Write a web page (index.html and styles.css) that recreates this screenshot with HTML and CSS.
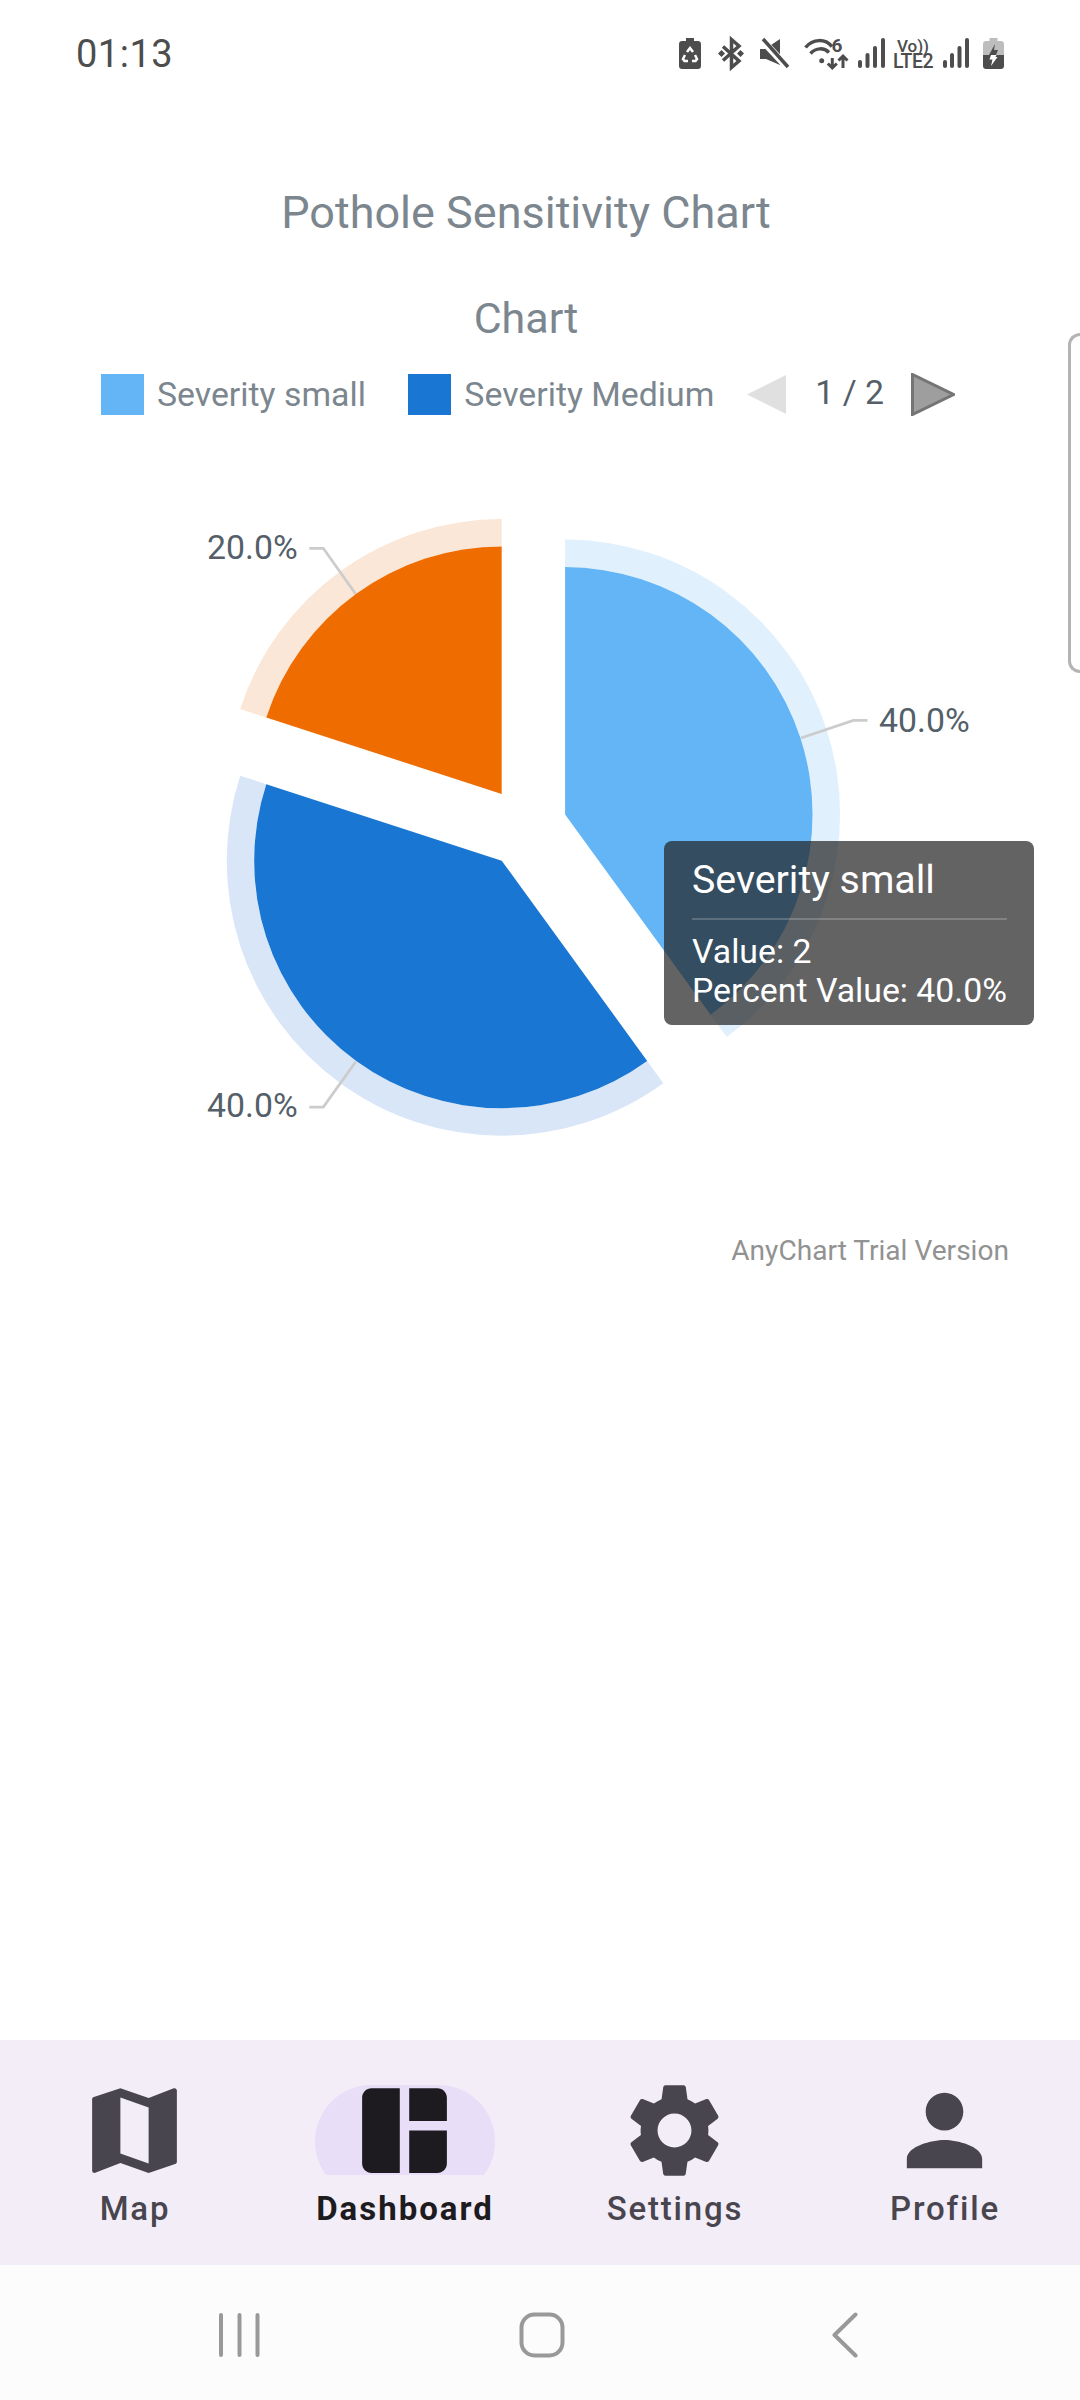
FILE: index.html
```html
<!DOCTYPE html>
<html lang="en">
<head>
    <meta charset="UTF-8">
    <meta name="viewport" content="width=device-width, initial-scale=1.0">
    <title>Pothole Sensitivity Chart</title>
    <link rel="stylesheet" href="styles.css">
</head>
<body>
    <div class="status-bar">
        <span class="clock">01:13</span>
        <div class="status-icons">
            <svg class="status-icon" width="22" height="31" viewBox="0 0 22 31">
                <path d="M7 0h8v3h4c1.700 0 3 1.300 3 3v22c0 1.700-1.300 3-3 3H3c-1.700 0-3-1.300-3-3V6c0-1.700 1.300-3 3-3h4z"/>
                <path class="cut" d="M8 14l3-4 3 4M16 17l2 4-1.500 2H13M9 23H5.500L4 21l2-4"/>
            </svg>
            <svg class="status-icon icon-bt" width="26" height="31" viewBox="0 0 26 31">
                <path class="line" d="M5 8.500l16 14.500-7.500 6.500V1.500L21 8 5 22.500"/>
                <path d="M0 15.500l3.500-3.500 3.500 3.500-3.500 3.500zM19 15.500l3.500-3.500 3.500 3.500-3.500 3.500z"/>
            </svg>
            <svg class="status-icon" width="29" height="31" viewBox="0 0 29 31">
                <path d="M0 11h5L20 1v26L6 21H0z"/>
                <path class="gap" d="M1 1l27 29"/>
                <path class="line" d="M3 1l25 28"/>
            </svg>
            <svg class="status-icon" width="43" height="31" viewBox="0 0 43 31">
                <path class="line" d="M.5 9.500C8 .5 20 .5 27 8.500M5.500 15.500C11 9.500 19 9.500 24 14.500"/>
                <circle cx="16.700" cy="22.700" r="2.500"/>
                <text class="status-six" x="26.500" y="14">6</text>
                <path class="line-thin" d="M27.300 20v10M22.800 25.500l4.500 4.500 4.500-4.500M38 30V18M33.500 22.500L38 18l4.500 4.500"/>
            </svg>
            <svg class="status-icon icon-tight" width="27" height="31" viewBox="0 0 27 31">
                <rect x="0" y="22" width="4" height="8" rx="2"/>
                <rect x="7.500" y="15" width="4" height="15" rx="2"/>
                <rect x="15" y="8" width="4" height="22" rx="2"/>
                <rect x="23" y="0" width="4" height="30" rx="2"/>
            </svg>
            <div class="volte">
                <span class="volte-top">Vo))</span>
                <span class="volte-bottom">LTE2</span>
            </div>
            <svg class="status-icon icon-tight" width="26" height="31" viewBox="0 0 26 31">
                <rect x="0" y="22" width="4" height="8" rx="2"/>
                <rect x="7" y="15" width="4" height="15" rx="2"/>
                <rect x="14.500" y="8" width="4" height="22" rx="2"/>
                <rect x="22" y="0" width="4" height="30" rx="2"/>
            </svg>
            <svg class="status-icon icon-battery" width="21" height="31" viewBox="0 0 21 31">
                <path class="battery-empty" d="M6.500 0h8v3h3.500c1.700 0 3 1.300 3 3v11H0V6c0-1.700 1.300-3 3-3h3.500z"/>
                <path d="M0 17h21v11c0 1.700-1.300 3-3 3H3c-1.700 0-3-1.300-3-3z"/>
                <path d="M12 6l-6 11h7l2-5h-4z"/>
                <path class="cut-fill" d="M8 17h5.500l-1 2h2L8 28l1.500-6.500H6.500z"/>
            </svg>
        </div>
    </div>

    <div class="edge-handle"></div>

    <main class="content">
        <h1 class="page-title">Pothole Sensitivity Chart</h1>
        <h2 class="chart-title">Chart</h2>

        <div class="legend">
            <div class="legend-item">
                <span class="swatch swatch-small"></span>
                <span>Severity small</span>
            </div>
            <div class="legend-item">
                <span class="swatch swatch-medium"></span>
                <span>Severity Medium</span>
            </div>
            <div class="pager">
                <svg width="39" height="39" viewBox="0 0 39 39"><path class="arrow-off" d="M39 0v39L0 19.500z"/></svg>
                <span class="pager-text">1 / 2</span>
                <svg width="44" height="43" viewBox="0 0 44 43"><path class="arrow-on" d="M1.500 1.500v40l41-20z"/></svg>
            </div>
        </div>

        <div class="chart-canvas">
            <svg class="pie" width="1052" height="730" viewBox="0 500 1052 730">
                <!-- hover rings -->
                <path class="ring-orange" d="M240.200 709A275 275 0 0 1 501.700 519V546.500A247.500 247.500 0 0 0 266.300 717.500Z"/>
                <path class="ring-dark" d="M663.300 1083.200A275 275 0 0 1 240.200 775.700L266.300 784.200A247.500 247.500 0 0 0 647.200 1060.900Z"/>
                <path class="ring-light" d="M565.100 539.600A275 275 0 0 1 726.700 1037.100L710.600 1014.800A247.500 247.500 0 0 0 565.100 567.100Z"/>

                <!-- leader lines -->
                <path class="leader" d="M309.300 548.300H323.300L355.700 594"/>
                <path class="leader" d="M309.300 1107H323.300L355.700 1061.700"/>
                <path class="leader" d="M801 738L853.400 720.400H867.500"/>

                <!-- slices -->
                <path class="slice-orange" d="M501.700 794L266.300 717.500A247.500 247.500 0 0 1 501.700 546.500Z"/>
                <path class="slice-dark" d="M501.700 860.700L647.200 1060.900A247.500 247.500 0 0 1 266.300 784.200Z"/>
                <path class="slice-light" d="M565.100 814.600V567.100A247.500 247.500 0 0 1 710.600 1014.800Z"/>

                <text class="slice-label" x="207" y="559">20.0%</text>
                <text class="slice-label" x="207" y="1117">40.0%</text>
                <text class="slice-label" x="879" y="732">40.0%</text>
            </svg>

            <div class="tooltip">
                <div class="tooltip-title">Severity small</div>
                <div class="tooltip-line"></div>
                <div class="tooltip-row">Value: 2</div>
                <div class="tooltip-row">Percent Value: 40.0%</div>
            </div>
        </div>

        <div class="watermark">AnyChart Trial Version</div>
    </main>

    <nav class="bottom-nav">
        <div class="nav-item">
            <div class="nav-icon">
                <svg width="113" height="113" viewBox="0 0 24 24">
                    <path fill-rule="evenodd" d="M20.500 3l-.16.03L15 5.100 9 3 3.360 4.900c-.21.07-.36.25-.36.48V20.500c0 .28.22.5.5.5l.16-.03L9 18.900l6 2.100 5.640-1.900c.21-.07.36-.25.36-.48V3.500c0-.28-.22-.5-.5-.5zM15 19l-6-2.110V5l6 2.110V19z"/>
                </svg>
            </div>
            <span class="nav-label">Map</span>
        </div>
        <div class="nav-item active">
            <div class="nav-icon">
                <span class="nav-pill"></span>
                <svg width="113" height="113" viewBox="0 0 24 24">
                    <path d="M11 21H5c-1.100 0-2-.9-2-2V5c0-1.100.9-2 2-2h6v18zm2 0h6c1.100 0 2-.9 2-2v-7h-8v9zm8-11V5c0-1.100-.9-2-2-2h-6v7h8z"/>
                </svg>
            </div>
            <span class="nav-label">Dashboard</span>
        </div>
        <div class="nav-item">
            <div class="nav-icon">
                <svg width="113" height="113" viewBox="0 0 24 24">
                    <path d="M19.140 12.940c.04-.3.06-.61.06-.94 0-.32-.02-.64-.07-.94l2.030-1.580c.18-.14.23-.41.12-.61l-1.920-3.320c-.12-.22-.37-.29-.59-.22l-2.390.96c-.5-.38-1.030-.7-1.620-.94L14.400 2.810c-.04-.24-.24-.41-.48-.41h-3.840c-.24 0-.43.17-.47.41L9.250 5.350c-.59.24-1.130.57-1.620.94l-2.390-.96c-.22-.08-.47 0-.59.22L2.740 8.870c-.12.21-.08.47.12.61l2.030 1.580c-.05.3-.09.63-.09.94s.02.64.07.94l-2.030 1.580c-.18.14-.23.41-.12.61l1.920 3.320c.12.22.37.29.59.22l2.390-.96c.5.38 1.030.7 1.620.94l.36 2.540c.05.24.24.41.48.41h3.840c.24 0 .44-.17.47-.41l.36-2.540c.59-.24 1.130-.56 1.620-.94l2.390.96c.22.08.47 0 .59-.22l1.920-3.320c.12-.22.07-.47-.12-.61l-2.010-1.580zM12 15.600c-1.980 0-3.600-1.620-3.600-3.600s1.620-3.600 3.600-3.600 3.600 1.620 3.600 3.600-1.620 3.600-3.600 3.600z"/>
                </svg>
            </div>
            <span class="nav-label">Settings</span>
        </div>
        <div class="nav-item">
            <div class="nav-icon">
                <svg width="113" height="113" viewBox="0 0 24 24">
                    <path d="M12 12c2.210 0 4-1.790 4-4s-1.790-4-4-4-4 1.790-4 4 1.790 4 4 4zm0 2c-2.670 0-8 1.340-8 4v2h16v-2c0-2.660-5.330-4-8-4z"/>
                </svg>
            </div>
            <span class="nav-label">Profile</span>
        </div>
    </nav>

    <div class="system-nav">
        <svg width="42" height="44" viewBox="0 0 42 44">
            <path d="M3 2v40M21.500 2v40M39.500 2v40"/>
        </svg>
        <svg width="46" height="46" viewBox="0 0 46 46">
            <rect x="2.500" y="2.500" width="41" height="41" rx="13"/>
        </svg>
        <svg width="26" height="46" viewBox="0 0 26 46">
            <path d="M23.500 2.500L2.500 23l21 20.500"/>
        </svg>
    </div>
</body>
</html>
```

FILE: styles.css
```css
* {
    box-sizing: border-box;
}

body {
    font-family: Roboto, "Noto Sans", sans-serif;
    background-color: #fff;
    margin: 0;
    padding: 0;
    width: 1080px;
    height: 2400px;
    display: flex;
    flex-direction: column;
    position: relative;
    overflow: hidden;
}

/* status bar */
.status-bar {
    height: 107px;
    padding: 0 76px;
    display: flex;
    align-items: center;
    justify-content: space-between;
    color: #4d4d4d;
}

.clock {
    font-size: 38px;
    letter-spacing: 0.5px;
}

.status-icons {
    display: flex;
    align-items: center;
}

.status-icon {
    fill: #4d4d4d;
    margin-left: 16px;
    overflow: visible;
}

.status-icon:first-child {
    margin-left: 0;
}

.status-icon.icon-bt {
    margin-left: 17px;
}

.status-icon.icon-tight {
    margin-left: 10px;
}

.status-icon.icon-battery {
    margin-left: 14px;
}

.status-icon .line {
    fill: none;
    stroke: #4d4d4d;
    stroke-width: 3.5;
}

.status-icon .line-thin {
    fill: none;
    stroke: #4d4d4d;
    stroke-width: 3;
}

.status-icon .gap {
    fill: none;
    stroke: #fff;
    stroke-width: 7;
}

.status-icon .cut {
    fill: none;
    stroke: #fff;
    stroke-width: 2.5;
}

.status-icon .cut-fill {
    fill: #fff;
}

.status-icon .battery-empty {
    fill: #bdbdbd;
}

.status-six {
    font-size: 19px;
    font-weight: 700;
}

.volte {
    width: 40px;
    margin-left: 8px;
    display: flex;
    flex-direction: column;
    align-items: center;
    line-height: 15px;
    font-weight: 500;
}

.volte-top {
    font-size: 17px;
}

.volte-bottom {
    font-size: 19.500px;
    letter-spacing: -0.5px;
}

/* chart */
.content {
    flex: 1;
    width: 1052px;
    padding-top: 81px;
}

.page-title,
.chart-title {
    margin: 0;
    color: #7c868e;
    font-size: 45px;
    font-weight: 400;
    line-height: 50px;
    text-align: center;
}

.chart-title {
    margin-top: 55px;
    font-size: 43px;
}

.legend {
    margin-top: 31px;
    padding-left: 101px;
    height: 41px;
    display: flex;
    align-items: center;
    color: #7c868e;
    font-size: 33.800px;
}

.legend-item {
    display: flex;
    align-items: center;
    gap: 13px;
    margin-right: 42.500px;
}

.legend-item:nth-child(2) {
    margin-right: 33px;
}

.swatch {
    width: 43px;
    height: 41px;
}

.swatch-small {
    background-color: #64b5f6;
}

.swatch-medium {
    background-color: #1976d2;
}

.pager {
    display: flex;
    align-items: center;
    gap: 27px;
}

.pager-text {
    color: #545f69;
    padding: 0 0 5px 2px;
}

.arrow-off {
    fill: #e0e0e0;
}

.arrow-on {
    fill: #9e9e9e;
    stroke: #757575;
    stroke-width: 3;
}

.chart-canvas {
    position: relative;
    margin-top: 85px;
    height: 730px;
}

.pie {
    display: block;
}

.ring-orange {
    fill: #fbe7d7;
}

.ring-dark {
    fill: #d9e6f7;
}

.ring-light {
    fill: #e1f0fd;
}

.slice-orange {
    fill: #ef6c00;
}

.slice-dark {
    fill: #1976d2;
}

.slice-light {
    fill: #64b5f6;
}

.leader {
    fill: none;
    stroke: #ccc;
    stroke-width: 2.75;
}

.slice-label {
    fill: #545f69;
    font-size: 33.800px;
}

.tooltip {
    position: absolute;
    left: 664px;
    top: 341px;
    width: 370px;
    height: 184px;
    padding: 16px 27px 0 28px;
    background-color: rgba(33, 33, 33, 0.7);
    border-radius: 8px;
    color: #fff;
}

.tooltip-title {
    font-size: 39.300px;
    line-height: 46px;
}

.tooltip-line {
    height: 2px;
    margin: 15px 0 13px;
    background-color: rgba(255, 255, 255, 0.2);
}

.tooltip-row {
    font-size: 33.800px;
    line-height: 38.500px;
}

.watermark {
    height: 36px;
    padding-top: 3px;
    padding-right: 43px;
    color: #929292;
    font-size: 28.100px;
    line-height: 36px;
    text-align: right;
}

.edge-handle {
    position: absolute;
    left: 1068px;
    top: 333px;
    width: 12px;
    height: 340px;
    border: 3px solid #b4b4b4;
    border-right: none;
    border-radius: 12px 0 0 12px;
}

/* bottom navigation */
.bottom-nav {
    height: 225px;
    padding-top: 34px;
    display: grid;
    grid-template-columns: repeat(4, 270px);
    background-color: #f3edf7;
}

.nav-item {
    display: flex;
    flex-direction: column;
    align-items: center;
    color: #49454f;
    fill: #49454f;
}

.nav-item.active {
    color: #1d1b20;
    fill: #1d1b20;
}

.nav-icon {
    position: relative;
    width: 113px;
    height: 113px;
    margin-left: -2px;
}

.nav-icon svg {
    position: relative;
    display: block;
}

.nav-pill {
    position: absolute;
    left: -33px;
    top: 11px;
    width: 180px;
    height: 90px;
    overflow: hidden;
}

.nav-pill::before {
    content: "";
    display: block;
    height: 113px;
    border-radius: 57px;
    background-color: #e8def8;
}

.nav-label {
    margin-top: 2px;
    font-size: 33px;
    font-weight: 500;
    line-height: 40px;
    letter-spacing: 1.800px;
}

.active .nav-label {
    font-weight: 700;
    letter-spacing: 2px;
}

/* system navigation */
.system-nav {
    height: 135px;
    padding: 5px 0 0 4px;
    display: grid;
    grid-template-columns: repeat(3, 303px);
    justify-content: center;
    justify-items: center;
    align-items: center;
    background-color: #fcfcfc;
}

.system-nav svg {
    fill: none;
    stroke: #999;
    stroke-width: 4;
    stroke-linecap: round;
    stroke-linejoin: round;
}
```
